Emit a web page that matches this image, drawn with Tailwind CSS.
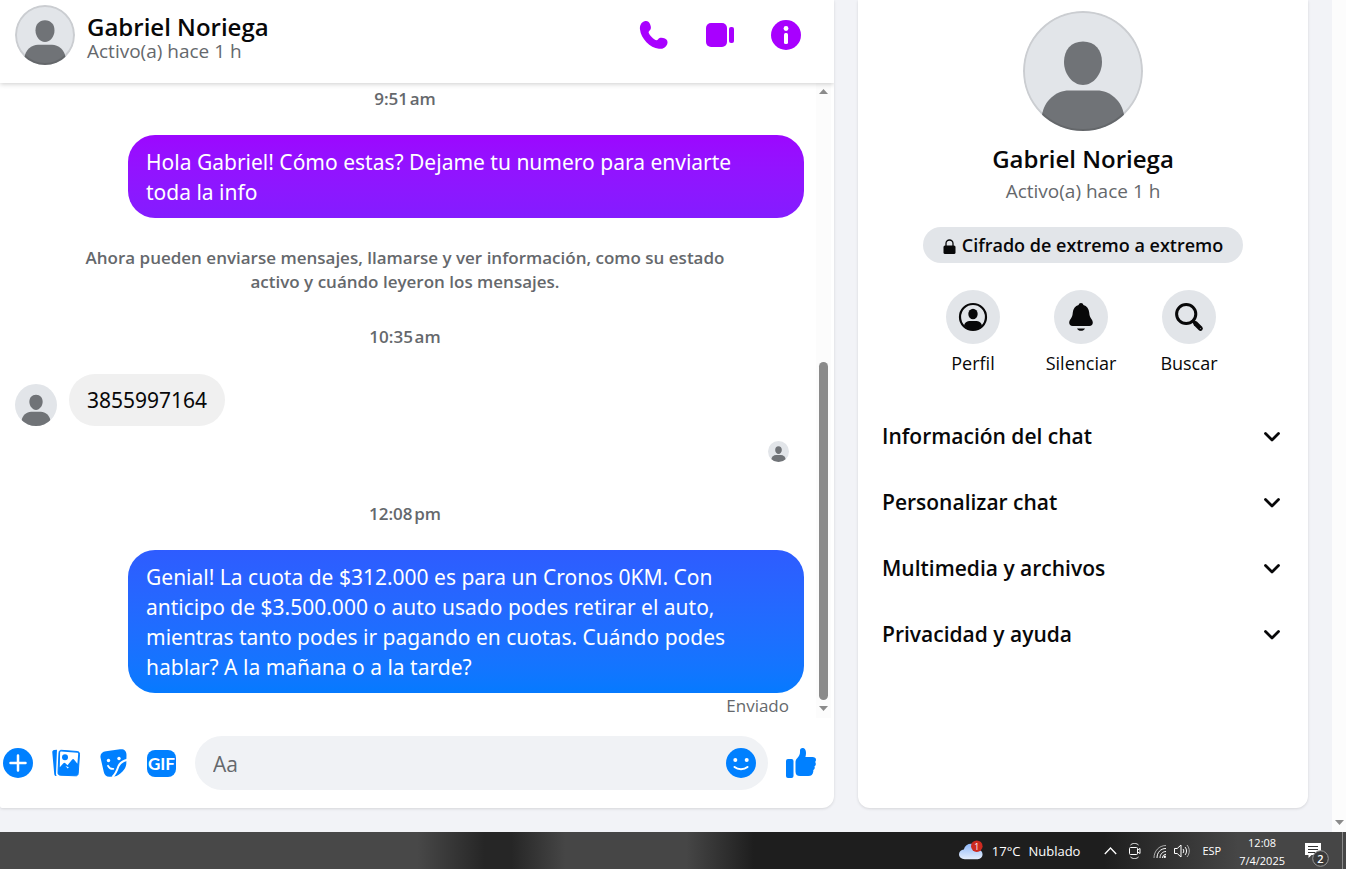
<!DOCTYPE html>
<html lang="es">
<head>
    <meta charset="UTF-8">
    <meta name="viewport" content="width=device-width, initial-scale=1.0">
    <title>Messenger | Gabriel Noriega</title>
    <!-- Tailwind CSS -->
    <script src="https://cdn.jsdelivr.net/npm/@tailwindcss/browser@4"></script>
</head>
<body class="h-screen flex flex-col overflow-hidden bg-[#f2f3f7] text-[#080809] font-['Segoe_UI','Open_Sans',sans-serif]">

    <!-- Shared artwork -->
    <svg class="hidden">
        <symbol id="avatar" viewBox="0 0 120 120">
            <rect width="120" height="120" fill="#e2e5e9"/>
            <path fill="#707377" d="M60 30.500c12 0 19 8.500 19 20.500S70.500 74 60 74 41 63 41 51s7-20.500 19-20.500z"/>
            <path fill="#707377" d="M19 104c2-14 14-24.500 27-24.500h28c13 0 25 10.500 27 24.500v16H19z"/>
        </symbol>
        <symbol id="chevron" viewBox="0 0 24 24">
            <path d="M5.500 9.500l6.500 6.500 6.500-6.500" fill="none" stroke="#080809" stroke-width="2.800" stroke-linecap="round" stroke-linejoin="round"/>
        </symbol>
    </svg>

    <main class="flex-1 min-h-0 flex">
        <div class="flex-1 min-w-0 flex gap-6 pb-6 pr-6">

            <!-- Conversation -->
            <section class="flex-1 min-w-0 flex flex-col bg-white rounded-br-xl rounded-bl-xs shadow-[0_1px_3px_rgba(0,0,0,0.12)]">
                <header class="h-[83px] shrink-0 flex items-start justify-between pt-[5px] pl-[15px] pr-[33px] shadow-[0_1px_5px_rgba(0,0,0,0.2)] [clip-path:inset(0_0_-8px_0)]">
                    <div class="flex gap-3">
                        <svg class="size-[60px] rounded-full"><use href="#avatar"/><circle cx="30" cy="30" r="29" fill="none" stroke="#000" stroke-opacity=".1" stroke-width="2"/></svg>
                        <div class="pt-2">
                            <h1 class="text-[24px] leading-7 font-semibold">Gabriel Noriega</h1>
                            <p class="text-[19px] leading-5 text-[#65686c]">Activo(a) hace 1 h</p>
                        </div>
                    </div>
                    <div class="flex gap-9 pt-[15px]">
                        <button aria-label="Llamar">
                            <svg class="size-[30px]" viewBox="0 0 30 30" fill="#a800ff"><path d="M5.500 1.200C8 .4 10 1.500 11 4c.8 2 1.300 3.800.6 5.300-.5 1.200-2 1.800-2 3 .2 2.400 5.400 7.800 8 8 1.200 0 1.800-1.700 3-2.200 1.500-.7 3.500-.4 5.300.5 2.400 1.200 3.200 3.200 2.300 5.600-1.300 3.600-4.700 4.900-8.300 4.600C11 28 2 18.500 1 9.500.6 5.700 2 2.300 5.500 1.200z"/></svg>
                        </button>
                        <button aria-label="Videollamada">
                            <svg class="size-[30px]" viewBox="0 0 30 30" fill="#a800ff"><rect x="1" y="3" width="21" height="24" rx="5"/><rect x="24" y="7" width="5" height="16" rx="2"/></svg>
                        </button>
                        <button aria-label="Información">
                            <svg class="size-[30px]" viewBox="0 0 30 30"><circle cx="15" cy="15" r="15" fill="#a800ff"/><circle cx="15" cy="8.500" r="2.400" fill="#fff"/><rect x="13" y="13" width="4" height="11" rx="1.500" fill="#fff"/></svg>
                        </button>
                    </div>
                </header>

                <div class="flex-1 min-h-0 flex pr-[3px]">
                    <div class="flex-1 min-w-0 flex flex-col overflow-hidden pl-[15px] pr-3">
                        <time class="mt-1 mr-[9px] self-center text-[17px] leading-6 font-semibold text-[#65686c]">9:51&#8202;am</time>
                        <div class="mt-6 self-end w-[676px] max-w-full rounded-[27px] bg-linear-to-b from-[#9c07ff] to-[#841cff] pl-[18px] pr-8 pt-3 pb-[11px] text-[21px] leading-[30px] text-white font-['Segoe_UI','Noto_Sans',sans-serif]">Hola Gabriel! Cómo estas? Dejame tu numero para enviarte toda la info</div>
                        <p class="mt-7 mr-[9px] self-center w-[660px] max-w-full text-center text-[17px] leading-6 font-semibold text-[#65686c]">Ahora pueden enviarse mensajes, llamarse y ver información, como su estado activo y cuándo leyeron los mensajes.</p>
                        <time class="mt-[31px] mr-[9px] self-center text-[17px] leading-6 font-semibold text-[#65686c]">10:35&#8202;am</time>
                        <div class="mt-[25px] flex items-end gap-3">
                            <svg class="size-[42px] rounded-full"><use href="#avatar"/></svg>
                            <div class="rounded-full bg-[#f0f0f0] px-[18px] py-[11px] text-[21px] leading-[30px] font-['Segoe_UI','Noto_Sans',sans-serif]">3855997164</div>
                        </div>
                        <svg class="mt-[15px] mr-[15px] self-end size-[21px] shrink-0 rounded-full"><use href="#avatar"/></svg>
                        <time class="mt-10 mr-[9px] self-center text-[17px] leading-6 font-semibold text-[#65686c]">12:08&#8202;pm</time>
                        <div class="mt-6 self-end w-[676px] max-w-full rounded-[27px] bg-linear-to-b from-[#2e5cff] to-[#057aff] pl-[18px] pr-8 pt-3 pb-[11px] text-[21px] leading-[30px] text-white font-['Segoe_UI','Noto_Sans',sans-serif]">Genial! La cuota de $312.000 es para un Cronos 0KM. Con anticipo de $3.500.000 o auto usado podes retirar el auto, mientras tanto podes ir pagando en cuotas. Cuándo podes hablar? A la mañana o a la tarde?</div>
                        <p class="mt-px mr-[15px] self-end text-[17px] leading-6 text-[#65686c]">Enviado</p>
                    </div>
                    <!-- Scrollbar -->
                    <div class="w-[15px] flex flex-col items-center bg-[#fcfcfc] pt-1.5 pb-[7px]">
                        <svg class="w-[9px] h-[5px]" viewBox="0 0 9 5"><path d="M0 5L4.500 0 9 5z" fill="#8b8b8b"/></svg>
                        <div class="flex-1 flex flex-col justify-end py-1.5"><div class="w-[9px] h-[338px] rounded-full bg-[#8b8b8b]"></div></div>
                        <svg class="w-[9px] h-[5px]" viewBox="0 0 9 5"><path d="M0 0l4.500 5L9 0z" fill="#8b8b8b"/></svg>
                    </div>
                </div>

                <!-- Composer -->
                <form class="h-[90px] shrink-0 flex items-center gap-[18px] pl-[3px] pr-[18px]">
                    <div class="flex items-center gap-[18px]">
                        <button type="button" aria-label="Más acciones">
                            <svg class="size-[30px]" viewBox="0 0 30 30"><circle cx="15" cy="15" r="15" fill="#0080ff"/><path d="M15 7.500v15M7.500 15h15" stroke="#fff" stroke-width="2.500" stroke-linecap="round"/></svg>
                        </button>
                        <button type="button" aria-label="Adjuntar archivo">
                            <svg class="size-[30px]" viewBox="0 0 30 30"><path d="M1.300 4.500c-.1-1.300.6-2.200 1.800-2.400L6 1.800 5 25.500c0 1 .2 1.800.6 2.600-1.600 0-2.300-.9-2.400-2.300z" fill="#0080ff"/><path d="M10.500 2.300l15.800 1.200c1.500.1 2.400 1.200 2.200 2.700l-1.300 19.400c-.1 1.500-1.200 2.400-2.700 2.200L9.200 27.200C7.700 27 6.800 26 7 24.500L8 4.600c.1-1.500 1-2.400 2.500-2.300z" fill="#0080ff" stroke="#0080ff"/><path d="M10.200 3.600l16 1.200c.7 0 1.100.5 1 1.200l-.8 9.700-3.200-4c-.7-.8-1.500-.8-2.200 0l-4.500 5.600-2.100-2c-.7-.7-1.400-.7-2 0l-3.600 4L9.100 4.700c0-.7.4-1.100 1.100-1.100z" fill="#fff"/><circle cx="14" cy="9.200" r="3" fill="#0080ff"/><path d="M14.500 18l2.300 2.500 1-1.200z" fill="#fff"/></svg>
                        </button>
                        <button type="button" aria-label="Elegir sticker">
                            <svg class="size-[30px]" viewBox="0 0 30 30"><path d="M7 3.200L21 1.300c4-.5 6.500 1.400 6.500 5.500l-.2 9.200c-.3 3-1.600 5.200-3.800 7.500-2.500 2.700-5 4.500-8.500 5l-4 .2c-3.500.2-5.500-1.300-6.200-4.700L1.600 10C.8 6 3 3.700 7 3.200z" fill="#0080ff"/><path d="M29 11.500c-5.500 1.500-8.500 3.500-9.700 7-1 3.200-2.300 7-5.800 10.500" fill="none" stroke="#fff" stroke-width="2"/><circle cx="9.500" cy="12.500" r="1.700" fill="#fff"/><circle cx="20" cy="10.500" r="1.700" fill="#fff"/><path d="M9 17.800c1.200 2.300 3 3.300 5.300 3.100" fill="none" stroke="#fff" stroke-width="1.800" stroke-linecap="round"/></svg>
                        </button>
                        <button type="button" aria-label="Elegir GIF" class="size-[30px] flex items-center">
                            <span class="w-[29px] h-[27px] rounded-lg bg-[#0080ff] flex items-center justify-center text-[17px] leading-none font-bold text-white font-['Lato',sans-serif]">GIF</span>
                        </button>
                    </div>
                    <div class="flex-1 min-w-0 h-[54px] flex items-center rounded-full bg-[#f0f2f5] pl-[18px] pr-3">
                        <input type="text" aria-label="Mensaje" placeholder="Aa" class="flex-1 min-w-0 bg-transparent outline-none pt-px text-[21px] leading-[30px] placeholder:text-[#65686c]">
                        <button type="button" aria-label="Elegir emoji">
                            <svg class="size-[30px]" viewBox="0 0 30 30"><circle cx="15" cy="15" r="15" fill="#0080ff"/><circle cx="9.300" cy="12" r="2" fill="#fff"/><circle cx="20.700" cy="12" r="2" fill="#fff"/><path d="M8.500 19c3.500 3 9.500 3 13 0" fill="none" stroke="#fff" stroke-width="2" stroke-linecap="round"/></svg>
                        </button>
                    </div>
                    <button type="button" aria-label="Enviar me gusta">
                        <svg class="size-[30px]" viewBox="0 0 30 30" fill="#0080ff"><path d="M0 13q0-2 2-2h3.500q2 0 2 2v15q0 2-2 2H2q-2 0-2-2z"/><path d="M9.500 14c0-1.500.6-2.700 1.700-3.800C13 8.300 14 6.500 14 4V2.500C14 1 15 0 16.500 0 19 0 20 2.300 20 5c0 1.500-.3 3-.6 4h7.100c2 0 3.500 1 3.500 2.800 0 1-.3 1.700-.9 2.200.5.500.7 1.200.7 1.900 0 1-.5 1.900-1.400 2.400.3.500.4 1 .3 1.600-.1 1-.7 1.700-1.500 2.100.2.500.2 1 .1 1.500-.4 3-2 4.500-5 4.500H14c-3 0-4.500-1.500-4.500-4.500z"/></svg>
                    </button>
                </form>
            </section>

            <!-- Contact details -->
            <aside class="w-[450px] shrink-0 flex flex-col items-center bg-white rounded-b-xl shadow-[0_1px_3px_rgba(0,0,0,0.12)] pt-[11px]">
                <svg class="size-[120px] shrink-0 rounded-full"><use href="#avatar"/><circle cx="60" cy="60" r="59" fill="none" stroke="#000" stroke-opacity=".1" stroke-width="2"/></svg>
                <h2 class="mt-3 text-[24px] leading-8 font-semibold">Gabriel Noriega</h2>
                <p class="mt-1 text-[19px] leading-6 text-[#65686c]">Activo(a) hace 1 h</p>
                <button class="mt-6 h-9 flex items-center gap-1.5 rounded-full bg-[#e2e5e9] px-5 text-[18px] leading-6 font-semibold">
                    <svg class="w-[13px] h-4 mt-1" viewBox="0 0 13 16"><rect x="0.500" y="6.500" width="12" height="8.500" rx="1.500" fill="#080809"/><path d="M3 7V4.500a3.500 3.500 0 017 0V7" fill="none" stroke="#080809" stroke-width="1.300"/></svg>
                    Cifrado de extremo a extremo
                </button>
                <div class="mt-[27px] mr-1 flex">
                    <button class="w-[108px] flex flex-col items-center gap-[7px] text-[18px] leading-6">
                        <span class="size-[54px] rounded-full bg-[#e2e5e9] flex items-center justify-center">
                            <svg class="size-[30px]" viewBox="0 0 30 30"><circle cx="15" cy="15" r="13" fill="none" stroke="#080809" stroke-width="2.200"/><ellipse cx="15" cy="12" rx="4.700" ry="5.200" fill="#080809"/><path d="M6 23.500C7 20 9.500 19 12 19h6c2.500 0 5 1 6 4.500-4.500 5.500-13.500 5.500-18 0z" fill="#080809"/></svg>
                        </span>
                        Perfil
                    </button>
                    <button class="w-[108px] flex flex-col items-center gap-[7px] text-[18px] leading-6">
                        <span class="size-[54px] rounded-full bg-[#e2e5e9] flex items-center justify-center">
                            <svg class="size-[30px]" viewBox="0 0 30 30" fill="#080809"><path d="M15 1c1.300 0 2.200.8 2.400 2 3.500 1 5.500 4 5.800 7.500.3 3 .6 4.300 2 6.200 1.100 1.500 1.600 2.500 1.600 3.900 0 2-1.200 3.400-3.500 3.400H6.700c-2.300 0-3.500-1.400-3.500-3.400 0-1.400.5-2.400 1.600-3.900 1.400-1.900 1.700-3.200 2-6.200C7.100 7 9.100 4 12.600 3c.2-1.200 1.100-2 2.400-2z"/><path d="M11 26.500h8c-.8 1.600-2.200 2.300-4 2.300s-3.200-.7-4-2.300z"/></svg>
                        </span>
                        Silenciar
                    </button>
                    <button class="w-[108px] flex flex-col items-center gap-[7px] text-[18px] leading-6">
                        <span class="size-[54px] rounded-full bg-[#e2e5e9] flex items-center justify-center">
                            <svg class="size-[30px]" viewBox="0 0 30 30" fill="none" stroke="#080809" stroke-linecap="round"><circle cx="12.200" cy="12" r="9.600" stroke-width="3"/><path d="M19 19l2 2" stroke-width="3"/><path d="M21.500 21.500l5 5" stroke-width="4.600"/><path d="M26.500 26.500h.01" stroke="#8a8c8f" stroke-width="1.200"/></svg>
                        </span>
                        Buscar
                    </button>
                </div>
                <div class="mt-7 w-full px-6 flex flex-col">
                    <button class="h-[66px] flex items-center justify-between text-[21px] leading-[30px] font-semibold">Información del chat<svg class="size-6"><use href="#chevron"/></svg></button>
                    <button class="h-[66px] flex items-center justify-between text-[21px] leading-[30px] font-semibold">Personalizar chat<svg class="size-6"><use href="#chevron"/></svg></button>
                    <button class="h-[66px] flex items-center justify-between text-[21px] leading-[30px] font-semibold">Multimedia y archivos<svg class="size-6"><use href="#chevron"/></svg></button>
                    <button class="h-[66px] flex items-center justify-between text-[21px] leading-[30px] font-semibold">Privacidad y ayuda<svg class="size-6"><use href="#chevron"/></svg></button>
                </div>
            </aside>
        </div>

        <!-- Page scrollbar -->
        <div class="w-[14px] shrink-0 flex flex-col items-center justify-end bg-[#fcfcfc] pb-[7px]">
            <svg class="w-[9px] h-[5px]" viewBox="0 0 9 5"><path d="M0 0l4.500 5L9 0z" fill="#8b8b8b"/></svg>
        </div>
    </main>

    <!-- Taskbar -->
    <footer class="h-[37px] shrink-0 flex items-center justify-end pr-[3px] text-white text-[13px] bg-[linear-gradient(90deg,#484848_0%,#484848_31%,#262626_36%,#262626_38%,#464646_42%,#464646_51%,#1e1e1e_56%,#1e1e1e_82%,#464646_92%,#464646_100%)]">
        <button class="flex items-center gap-2">
            <svg class="w-[25px] h-6" viewBox="0 0 26 24">
                <defs><linearGradient id="cloud" x1="0" y1="0" x2="0" y2="1"><stop offset="0" stop-color="#8fb8f8"/><stop offset="1" stop-color="#e4edfc"/></linearGradient></defs>
                <path d="M6 20.500c-3.500 0-6-2-6-5s2.300-4.700 5-5C6 6.500 9 4.500 12.500 4.500c4 0 6.700 2.500 7.500 6 2.500.3 4.500 2.200 4.500 5s-2.200 5-5 5z" fill="url(#cloud)"/>
                <circle cx="18.500" cy="7" r="6" fill="#cc2a20"/>
                <text x="18.500" y="10.500" font-size="9" text-anchor="middle" fill="#fff">1</text>
            </svg>
            <span class="pt-0.5">17°C</span>
            <span class="pt-0.5">Nublado</span>
        </button>
        <button class="ml-6" aria-label="Mostrar iconos ocultos">
            <svg class="w-[13px] h-3" viewBox="0 0 13 12" fill="none" stroke="#fff" stroke-width="1.300"><path d="M.8 9l5.700-6 5.700 6"/></svg>
        </button>
        <button class="ml-3" aria-label="Reunirse ahora">
            <svg class="w-3 h-4" viewBox="0 0 12 16" fill="none" stroke="#fff"><rect x="0.500" y="4.500" width="8" height="7" rx="1"/><path d="M8.500 7l2.500-1.500v5L8.500 9M1.500 2C4-.2 7-.2 9.500 2M1.500 14c2.500 2.200 5.500 2.200 8 0"/></svg>
        </button>
        <button class="ml-3" aria-label="Red">
            <svg class="w-[14px] h-4" viewBox="0 0 14 16" fill="none" stroke="#fff"><path d="M1 15C1 8 6 2.500 13 2.500" stroke-opacity=".6"/><path d="M4 15c0-5.500 3.500-9.500 9-9.500M7 15c0-3.700 2.500-6.500 6-6.500M9.500 15c0-2.200 1.500-3.700 3.500-3.700"/><circle cx="11.800" cy="13.800" r="1.200" fill="#fff" stroke="none"/></svg>
        </button>
        <button class="ml-[7px]" aria-label="Volumen">
            <svg class="size-4" viewBox="0 0 16 16" fill="none" stroke="#fff"><path d="M.5 5.500h2.700L7 2v12l-3.800-3.500H.5z"/><path d="M9 6c1 1.200 1 2.800 0 4M11 4c2 2.300 2 5.700 0 8"/><path d="M13 2c3 3.500 3 8.500 0 12" stroke-opacity=".6"/></svg>
        </button>
        <button class="ml-3 pt-0.5 text-[11px]">ESP</button>
        <button class="ml-[18px] pt-0.5 flex flex-col items-center text-[11px] leading-[18px]"><span>12:08</span><span>7/4/2025</span></button>
        <button class="ml-5 mr-[13px]" aria-label="Notificaciones">
            <svg class="w-6 h-[25px] mt-2" viewBox="0 0 24 25">
                <path d="M0 1h16v12H6.500L3.500 16v-3H0z" fill="#fff"/>
                <path d="M3 4.500h10M3 7.500h10M3 10.500h7" stroke="#333"/>
                <circle cx="15.500" cy="16.500" r="7.800" fill="#3a3a3a" stroke="#999"/>
                <text x="15.500" y="20.500" font-size="11" font-weight="600" text-anchor="middle" fill="#fff">2</text>
            </svg>
        </button>
        <span class="w-px h-full bg-[#8a8a8a]"></span>
    </footer>
</body>
</html>
